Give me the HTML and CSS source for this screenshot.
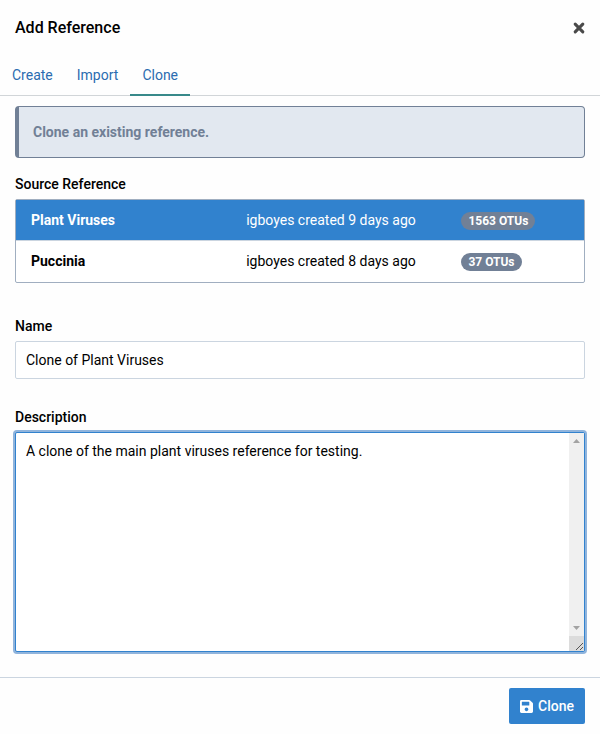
FILE: index.html
```html
<!DOCTYPE html>
<html lang="en">
<head>
<meta charset="utf-8">
<title>Add Reference</title>
<link rel="stylesheet" href="styles.css">
</head>
<body>
<main class="dialog">
  <header class="dialog-header">
    <h1 class="dialog-title">Add Reference</h1>
    <button class="close" type="button" aria-label="Close">
      <svg width="12" height="12" viewBox="0 0 12 12"><path d="M2.2 2.2 9.8 9.8M9.8 2.2 2.2 9.8" fill="none" stroke="currentColor" stroke-width="3.1" stroke-linecap="round"/></svg>
    </button>
  </header>
  <nav class="tabs">
    <a class="tab" href="#create">Create</a>
    <a class="tab" href="#import">Import</a>
    <a class="tab tab-active" href="#clone">Clone</a>
  </nav>
  <form class="form">
    <div class="dialog-body">
      <div class="alert">Clone an existing reference.</div>
      <section class="source">
        <h2 class="label">Source Reference</h2>
        <div class="list">
          <button class="row row-active" type="button">
            <strong class="row-name">Plant Viruses</strong>
            <span>igboyes created 9 days ago</span>
            <span class="badge">1563 OTUs</span>
          </button>
          <button class="row" type="button">
            <strong class="row-name">Puccinia</strong>
            <span>igboyes created 8 days ago</span>
            <span class="badge">37 OTUs</span>
          </button>
        </div>
      </section>
      <div class="field">
        <label class="label" for="name">Name</label>
        <input class="input" id="name" type="text" value="Clone of Plant Viruses">
      </div>
      <div class="field">
        <label class="label" for="description">Description</label>
        <div class="textarea-frame">
          <textarea class="input textarea" id="description">A clone of the main plant viruses reference for testing.</textarea>
          <div class="scrollbar" aria-hidden="true">
            <svg class="arrow" width="15" height="15" viewBox="0 0 15 15"><path d="M4 10 7.5 6 11 10z" fill="#a3a3a3"/></svg>
            <svg class="arrow" width="15" height="15" viewBox="0 0 15 15"><path d="M4 5 7.5 9 11 5z" fill="#a3a3a3"/></svg>
            <svg class="corner" width="15" height="15" viewBox="0 0 15 15"><path d="M7 14 14 7M11 14l3-3" fill="none" stroke="#555" stroke-width="1"/></svg>
          </div>
        </div>
      </div>
    </div>
    <footer class="dialog-footer">
      <button class="save" type="submit">
        <svg width="13" height="15" viewBox="0 0 448 512" aria-hidden="true"><path fill="currentColor" d="M433.9 129.9l-83.9-83.9A48 48 0 0 0 316.1 32H48C21.500 32 0 53.500 0 80v352c0 26.500 21.500 48 48 48h352c26.500 0 48-21.500 48-48V163.900a48 48 0 0 0-14.100-34zM224 416c-35.300 0-64-28.700-64-64s28.700-64 64-64 64 28.700 64 64-28.700 64-64 64zm96-304.500V212c0 6.600-5.400 12-12 12H76c-6.600 0-12-5.400-12-12V108c0-6.600 5.400-12 12-12h228.500c3.200 0 6.200 1.300 8.500 3.500l3.500 3.500a12 12 0 0 1 3.500 8.500z"/></svg>
        <span>Clone</span>
      </button>
    </footer>
  </form>
</main>
</body>
</html>
```

FILE: styles.css
```css
* {
  box-sizing: border-box;
}

body {
  margin: 0;
  background: #fefefe;
  color: #000;
  font: 14px/21px Roboto, sans-serif;
}

button,
input,
textarea {
  font: inherit;
}

.dialog-header {
  display: flex;
  align-items: center;
  justify-content: space-between;
  height: 55px;
  padding: 0 15px;
}

.dialog-title {
  margin: 0;
  font-size: 16px;
  font-weight: 500;
}

.close {
  display: flex;
  padding: 0;
  border: 0;
  background: none;
  color: #4a4a4a;
}

.tabs {
  display: flex;
  border-bottom: 1px solid #d1d5d8;
}

.tab {
  margin-bottom: -1px;
  padding: 10px 12px 8px;
  border-bottom: 2px solid transparent;
  color: #2b6cb0;
  text-decoration: none;
}

.tab-active {
  border-bottom-color: #38898a;
}

.dialog-body {
  padding: 10px 15px 25px;
}

.alert {
  margin-bottom: 16px;
  padding: 15px 14px 14px;
  border: 1px solid #718096;
  border-left-width: 4px;
  border-radius: 4px;
  background: #e2e8f0;
  color: #718096;
  font-weight: 700;
}

.source {
  margin-bottom: 33px;
}

.field + .field {
  margin-top: 28px;
}

.label {
  display: block;
  margin: 0 0 4px;
  font-size: 14px;
  font-weight: 500;
}

.list {
  padding-bottom: 1px;
  border: 1px solid #a0aec0;
  border-radius: 2px;
  background: #fff;
}

.row {
  display: grid;
  grid-template-columns: 2fr 2fr 1fr;
  align-items: start;
  width: 100%;
  padding: 10px 15px 9px;
  border: 0;
  background: #fff;
  color: #000;
  text-align: left;
}

.row + .row {
  border-top: 1px solid #cbd5e0;
}

.row-active {
  background: #3182ce;
  color: #fff;
}

.row-name {
  font-weight: 700;
}

.badge {
  justify-self: start;
  margin-top: 2px;
  padding: 0 7px;
  border-radius: 9px;
  background: #718096;
  color: #fff;
  font-size: 12px;
  line-height: 18px;
  font-weight: 700;
}

.input {
  display: block;
  width: 100%;
  height: 38px;
  padding: 8px 10px;
  border: 1px solid #cbd5e0;
  border-radius: 2px;
  outline: 0;
  background: #fff;
  color: #000;
}

.textarea-frame {
  position: relative;
}

.textarea {
  height: 220px;
  padding-right: 25px;
  border-color: #3182ce;
  box-shadow: 0 0 0 2px #90b4dc;
  resize: none;
}

.scrollbar {
  position: absolute;
  top: 1px;
  right: 1px;
  bottom: 1px;
  display: flex;
  flex-direction: column;
  width: 15px;
  background: #f0f0f0;
}

.arrow + .arrow {
  margin-top: auto;
}

.corner {
  background: #dcdcdc;
}

.dialog-footer {
  display: flex;
  justify-content: flex-end;
  padding: 10px 15px;
  border-top: 1px solid #cbd5e0;
}

.save {
  display: flex;
  align-items: center;
  gap: 5px;
  height: 36px;
  padding: 0 11px;
  border: 0;
  border-radius: 2px;
  background: #3182ce;
  color: #fff;
  font-weight: 500;
}
```
